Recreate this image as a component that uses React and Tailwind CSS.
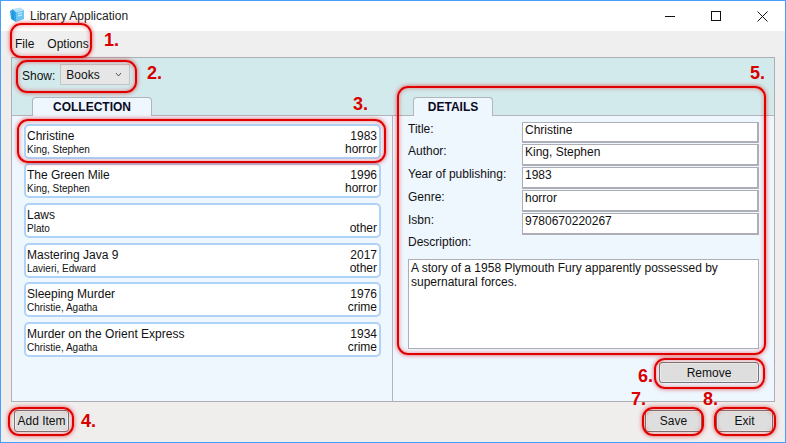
const items = [
  { title: "Christine", author: "King, Stephen", year: "1983", genre: "horror", mt: "mt-0" },
  { title: "The Green Mile", author: "King, Stephen", year: "1996", genre: "horror", mt: "mt-[4px]" },
  { title: "Laws", author: "Plato", year: "", genre: "other", mt: "mt-[5px]" },
  { title: "Mastering Java 9", author: "Lavieri, Edward", year: "2017", genre: "other", mt: "mt-[5px]" },
  { title: "Sleeping Murder", author: "Christie, Agatha", year: "1976", genre: "crime", mt: "mt-[4px]" },
  { title: "Murder on the Orient Express", author: "Christie, Agatha", year: "1934", genre: "crime", mt: "mt-[5px]" },
];

const fields = [
  { label: "Title:", value: "Christine", h: "h-[21px]" },
  { label: "Author:", value: "King, Stephen", h: "h-[22px]" },
  { label: "Year of publishing:", value: "1983", h: "h-[22px]" },
  { label: "Genre:", value: "horror", h: "h-[22px]" },
  { label: "Isbn:", value: "9780670220267", h: "h-[22px]" },
];

const rings = [
  "left-[10px] top-[23px] w-[82px] h-[35px]",
  "left-[16px] top-[60px] w-[121px] h-[33px]",
  "left-[17px] top-[119px] w-[369px] h-[44px]",
  "left-[8px] top-[407px] w-[66px] h-[29px]",
  "left-[397px] top-[86px] w-[369px] h-[269px]",
  "left-[654px] top-[358px] w-[111px] h-[31px]",
  "left-[642px] top-[407px] w-[62px] h-[29px]",
  "left-[714px] top-[407px] w-[62px] h-[29px]",
];

const numbers = [
  { text: "1.", pos: "left-[104px] top-[30px]" },
  { text: "2.", pos: "left-[147px] top-[63px]" },
  { text: "3.", pos: "left-[353px] top-[94px]" },
  { text: "4.", pos: "left-[81px] top-[411px]" },
  { text: "5.", pos: "left-[750px] top-[63px]" },
  { text: "6.", pos: "left-[638px] top-[366px]" },
  { text: "7.", pos: "left-[631px] top-[389px]" },
  { text: "8.", pos: "left-[703px] top-[389px]" },
];

function BookIcon() {
  return (
    <svg width="16" height="16" viewBox="0 0 16 16" className="ml-[8px] -mt-[3px] shrink-0">
      <path d="M1 4 L4 2 L7 5 L7 15 L2 12 Z" fill="#2ea6e8" />
      <path d="M7 5 L15 3 L15 12 L7 15 Z" fill="#6cc6f2" />
      <path d="M4 2 L11 0.5 L15 3 L7 5 Z" fill="#b5e2f8" />
      <path d="M9 6.5 L13 5.5 M9 9 L13 8" stroke="#d5effc" strokeWidth="1" />
      <path d="M4 5 L4 13" stroke="#1b86c8" strokeWidth="1" />
    </svg>
  );
}

function WindowControls() {
  return (
    <div className="ml-auto flex items-center">
      <div className="w-[46px] h-[30px] flex items-center justify-center">
        <div className="w-[10px] h-px bg-[#111]" />
      </div>
      <div className="w-[46px] h-[30px] flex items-center justify-center">
        <div className="w-[10px] h-[10px] border border-[#111]" />
      </div>
      <div className="w-[46px] h-[30px] flex items-center justify-center">
        <svg width="11" height="11" viewBox="0 0 11 11">
          <path d="M0.5 0.5 L10.5 10.5 M10.5 0.5 L0.5 10.5" stroke="#111" strokeWidth="1" />
        </svg>
      </div>
    </div>
  );
}

function Tab({ label, className }) {
  return (
    <div className={"h-[19px] -mb-px bg-[#eef6fe] border border-b-0 border-[#b4b4bc] rounded-t-[4px] flex items-center justify-center font-bold text-[12px] text-[#0a0a1e] " + className}>
      {label}
    </div>
  );
}

function GrayButton({ label, className }) {
  return (
    <button className={"bg-[#dedede] border border-[#777] rounded-[3px] text-[12px] text-[#111] flex items-center justify-center shadow-[inset_0_0_0_1px_#eee] " + className}>
      {label}
    </button>
  );
}

export default function App() {
  return (
    <div className="relative w-[786px] h-[443px] flex flex-col overflow-hidden bg-[#f0eded] border border-[#4a9eff] font-['Liberation_Sans',Arial,sans-serif] text-[#111]">
      <div className="h-[30px] bg-white flex items-center shrink-0">
        <BookIcon />
        <span className="ml-[5px] text-[12px] text-[#222]">Library Application</span>
        <WindowControls />
      </div>

      <div className="h-[26px] bg-[#efefef] flex items-center pl-[14px] gap-[13px] text-[12px] shrink-0">
        <span>File</span>
        <span>Options</span>
      </div>

      <div className="mx-[10px] h-[345px] shrink-0 border border-[#aeaeb6] flex flex-col">
        <div className="h-[58px] bg-[#d2eaec] shrink-0 border-b border-[#b4b4bc] flex flex-col">
          <div className="h-[38px] pl-[10px] pt-[6px] flex items-start">
            <span className="text-[12px] mt-[3px]">Show:</span>
            <div className="ml-[5px] w-[70px] h-[21px] bg-[#e6e6e6] border border-[#c4c4c4] flex items-center pl-[5px] pr-[7px] text-[12px]">
              Books
              <svg width="7" height="5" viewBox="0 0 7 5" className="ml-auto">
                <path d="M1 1 L3.5 4 L6 1" fill="none" stroke="#555" strokeWidth="1" />
              </svg>
            </div>
          </div>
          <div className="flex mt-auto">
            <div className="w-[381px] pl-[20px]">
              <Tab label="COLLECTION" className="w-[120px]" />
            </div>
            <div className="pl-[20px]">
              <Tab label="DETAILS" className="w-[80px]" />
            </div>
          </div>
        </div>

        <div className="flex-1 flex bg-[#eef6fe] min-h-0">
          <div className="w-[381px] shrink-0 border-r border-[#b4b4bc] pl-[12px] pt-[8px]">
            {items.map((item) => (
              <div
                key={item.title}
                className={"w-[357px] h-[35px] bg-white border-2 border-[#aed2f8] rounded-[5px] pl-[1px] pr-[2px] flex justify-between " + item.mt}
              >
                <div>
                  <div className="text-[12px] leading-[14px] mt-[3px]">{item.title}</div>
                  <div className="text-[10px] leading-[11px] mt-[1px]">{item.author}</div>
                </div>
                <div className="text-right">
                  <div className="text-[12px] leading-[14px] mt-[3px] h-[13px]">{item.year}</div>
                  <div className="text-[12px] leading-[14px]">{item.genre}</div>
                </div>
              </div>
            ))}
          </div>

          <div className="flex-1 pl-[15px] pt-[6px] flex flex-col">
            <div className="flex flex-col gap-[1px]">
              {fields.map((field) => (
                <div key={field.label} className={"flex " + field.h}>
                  <span className="w-[114px] text-[12px] leading-[14px]">{field.label}</span>
                  <div className="w-[237px] border-2 border-[#aeaeb6] border-t border-l bg-white text-[12px] leading-[14px] pl-[2px]">
                    {field.value}
                  </div>
                </div>
              ))}
            </div>
            <div className="text-[12px] leading-[14px]">Description:</div>
            <div className="w-[351px] h-[90px] mt-[10px] border border-[#aeaeb6] bg-white text-[12px] leading-[14px] px-[2px] py-px">
              A story of a 1958 Plymouth Fury apparently possessed by supernatural forces.
            </div>
            <div className="flex justify-end w-[351px] mt-[13px]">
              <GrayButton label="Remove" className="w-[100px] h-[21px]" />
            </div>
          </div>
        </div>
      </div>

      <div className="flex-1 flex items-center pl-[13px] pr-[12px] pb-[2px]">
        <GrayButton label="Add Item" className="w-[55px] h-[22px]" />
        <GrayButton label="Save" className="ml-auto w-[57px] h-[22px]" />
        <GrayButton label="Exit" className="ml-[14px] w-[57px] h-[22px]" />
      </div>

      {rings.map((pos) => (
        <div
          key={pos}
          className={"absolute -translate-x-px -translate-y-px border-2 border-[#e00000] rounded-[11px] shadow-[0_0_4px_#e00000aa,inset_0_0_4px_#e0000077] " + pos}
        />
      ))}
      {numbers.map((n) => (
        <span
          key={n.text}
          className={"absolute -translate-x-px -translate-y-px text-[18px] leading-[20px] font-bold text-[#d80000] " + n.pos}
        >
          {n.text}
        </span>
      ))}
    </div>
  );
}
